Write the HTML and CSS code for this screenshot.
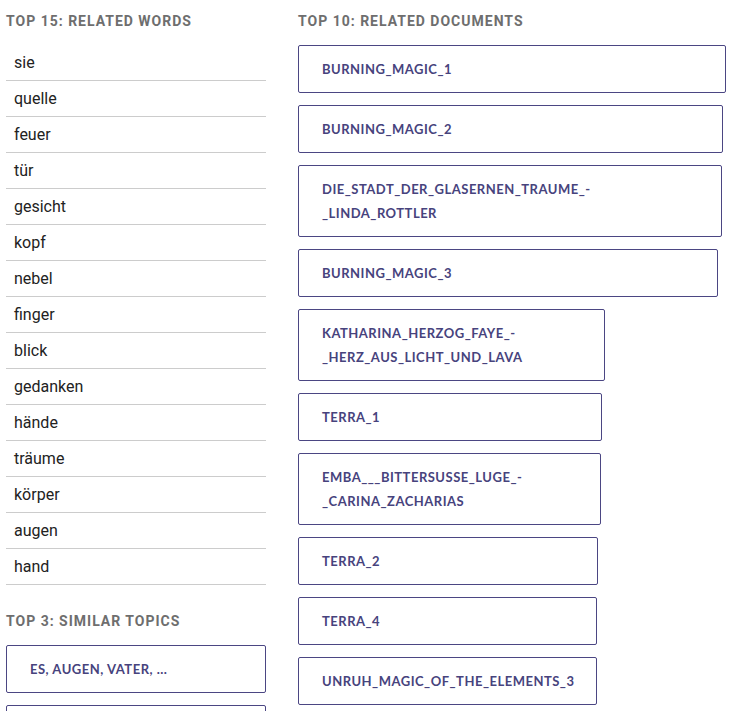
FILE: index.html
```html
<!DOCTYPE html>
<html lang="de">
<head>
<meta charset="utf-8">
<title>Related</title>
<link rel="stylesheet" href="styles.css">
</head>
<body>
<div class="page">
  <section class="col-left">
    <h2 class="heading">Top 15: Related Words</h2>
    <ul class="words">
      <li class="word">sie</li>
      <li class="word">quelle</li>
      <li class="word">feuer</li>
      <li class="word">tür</li>
      <li class="word">gesicht</li>
      <li class="word">kopf</li>
      <li class="word">nebel</li>
      <li class="word">finger</li>
      <li class="word">blick</li>
      <li class="word">gedanken</li>
      <li class="word">hände</li>
      <li class="word">träume</li>
      <li class="word">körper</li>
      <li class="word">augen</li>
      <li class="word">hand</li>
    </ul>
    <h2 class="heading heading-topics">Top 3: Similar Topics</h2>
    <div class="boxes">
      <a class="box" href="#">ES, AUGEN, VATER, ...</a>
      <a class="box" href="#">ER, HAND, FEUER, ...</a>
      <a class="box" href="#">SIE, MAGIE, WELT, ...</a>
    </div>
  </section>
  <section class="col-right">
    <h2 class="heading">Top 10: Related Documents</h2>
    <div class="boxes">
      <a class="box" href="#" style="width:428px">BURNING_MAGIC_1</a>
      <a class="box" href="#" style="width:425px">BURNING_MAGIC_2</a>
      <a class="box" href="#" style="width:424px">DIE_STADT_DER_GLASERNEN_TRAUME_-_LINDA_ROTTLER</a>
      <a class="box" href="#" style="width:420px">BURNING_MAGIC_3</a>
      <a class="box" href="#" style="width:307px">KATHARINA_HERZOG_FAYE_-_HERZ_AUS_LICHT_UND_LAVA</a>
      <a class="box" href="#" style="width:304px">TERRA_1</a>
      <a class="box" href="#" style="width:303px">EMBA___BITTERSUSSE_LUGE_-_CARINA_ZACHARIAS</a>
      <a class="box" href="#" style="width:300px">TERRA_2</a>
      <a class="box" href="#" style="width:299px">TERRA_4</a>
      <a class="box" href="#" style="width:299px">UNRUH_MAGIC_OF_THE_ELEMENTS_3</a>
    </div>
  </section>
</div>
</body>
</html>
```

FILE: styles.css
```css
html, body {
  margin: 0;
  padding: 0;
  background: #ffffff;
}

.page {
  display: flex;
  align-items: flex-start;
  gap: 32px;
  padding: 11px 12px 0 6px;
}

.col-left {
  width: 260px;
  flex: none;
}

.col-right {
  flex: 1;
  min-width: 0;
}

.heading {
  margin: 0 0 14px;
  font-family: Roboto, "Liberation Sans", sans-serif;
  font-weight: 700;
  font-size: 14px;
  line-height: 20px;
  letter-spacing: 1px;
  text-transform: uppercase;
  color: #6e6e6e;
}

.col-right .heading {
  margin-bottom: 14px;
}

.heading-topics {
  margin-top: 26px;
  margin-bottom: 14px;
}

.words {
  list-style: none;
  margin: 0;
  padding: 0;
}

.word {
  height: 35px;
  line-height: 35px;
  padding-left: 8px;
  border-bottom: 1px solid #cccccc;
  font-family: Roboto, "Liberation Sans", sans-serif;
  font-size: 16px;
  color: #222222;
}

.boxes {
  display: flex;
  flex-direction: column;
  align-items: flex-start;
  gap: 12px;
}

.col-left .box {
  width: 100%;
}

.box {
  display: block;
  box-sizing: border-box;
  padding: 11px 23px;
  border: 1px solid #4b4683;
  border-radius: 2px;
  font-family: Lato, "Open Sans", sans-serif;
  font-weight: 700;
  font-size: 13px;
  line-height: 24px;
  letter-spacing: 0.5px;
  color: #47437d;
  text-decoration: none;
}
```
